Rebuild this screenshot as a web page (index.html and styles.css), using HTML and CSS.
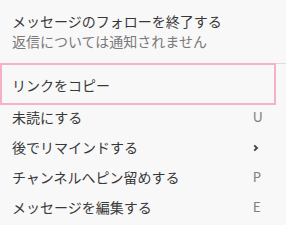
FILE: index.html
```html
<!DOCTYPE html>
<html>
<head>
<meta charset="UTF-8">
<title>メッセージメニュー</title>
<link rel="stylesheet" href="styles.css">
</head>
<body>
<div class="menu">
    <div class="top">
        <div class="title">メッセージのフォローを終了する</div>
        <div class="sub">返信については通知されません</div>
    </div>
    <hr class="divider">
    <div class="item focused">
        <span class="label">リンクをコピー</span>
    </div>
    <div class="list">
        <div class="item">
            <span class="label">未読にする</span>
            <span class="key">U</span>
        </div>
        <div class="item">
            <span class="label">後でリマインドする</span>
            <span class="key">
                <svg width="6" height="8" viewBox="0 0 6 8"><path d="M1.2 1.4 L4 4 L1.2 6.6" fill="none" stroke="#444" stroke-width="1.9"/></svg>
            </span>
        </div>
        <div class="item">
            <span class="label">チャンネルへピン留めする</span>
            <span class="key">P</span>
        </div>
        <div class="item">
            <span class="label">メッセージを編集する</span>
            <span class="key">E</span>
        </div>
    </div>
</div>
</body>
</html>
```
FILE: styles.css
```css
body {
  margin: 0;
  background: #f8f8f8;
  font-family: Lato, "Noto Sans CJK JP", sans-serif;
  font-size: 14px;
  color: #383838;
}

.menu {
  width: 286px;
}

.top {
  padding: 12px 12px 0 12px;
  height: 51px;
}
.title {
  line-height: 20px;
}
.sub {
  line-height: 20px;
  color: #7a797a;
}

.divider {
  margin: 0;
  border: none;
  border-top: 1px solid #dddddd;
}

.item {
  display: flex;
  align-items: center;
  height: 30px;
  padding: 0 23px 0 12px;
}
.label {
  flex: 1;
}
.key {
  width: 10px;
  color: #808080;
  font-size: 13px;
}

.focused {
  position: relative;
  top: -1px;
  width: 276px;
  padding: 1px 0 0 10px;
  border: 2px solid #f4b1c9;
  box-sizing: border-box;
  height: 42px;
}

.list {
  margin-top: -4px;
}
```
